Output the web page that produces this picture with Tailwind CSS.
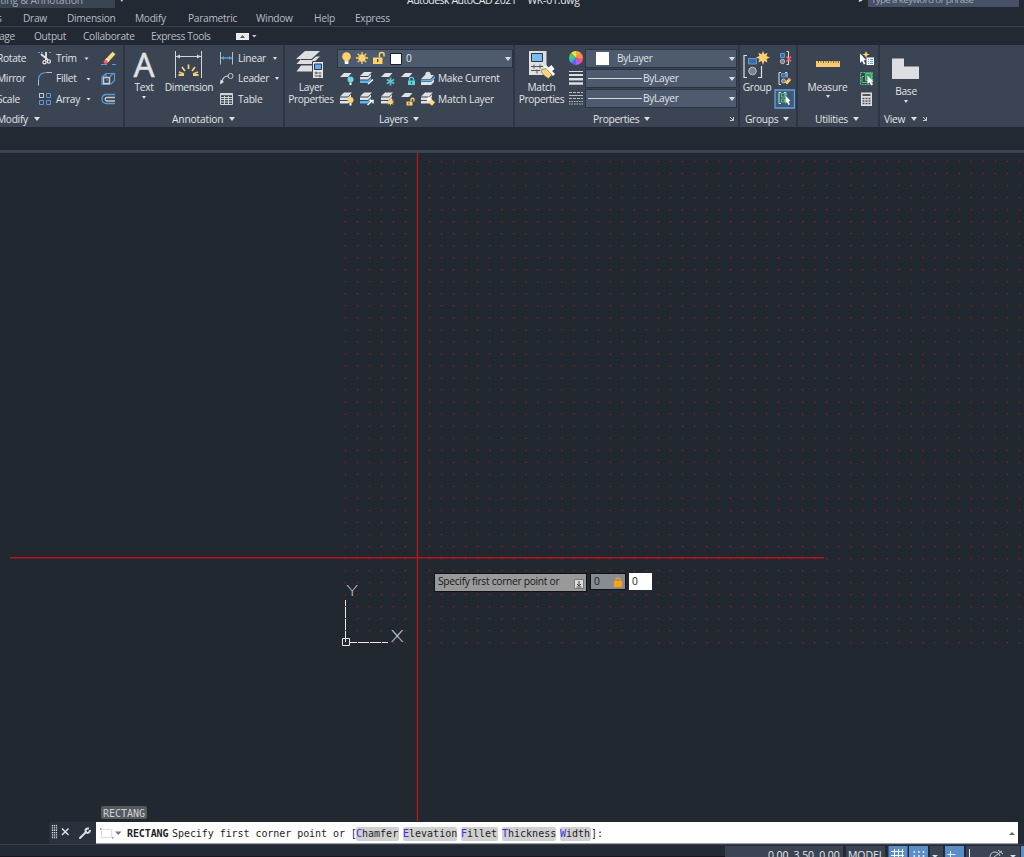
<!DOCTYPE html>
<html lang="en">
<head>
    <meta charset="UTF-8">
    <meta name="viewport" content="width=device-width, initial-scale=1.0">
    <title>Autodesk AutoCAD 2021 - WK-01.dwg</title>
    <script src="https://cdn.jsdelivr.net/npm/@tailwindcss/browser@4"></script>
</head>
<body class="h-[857px] w-[1024px] overflow-hidden bg-[#222933] font-['Open_Sans','Noto_Sans',sans-serif] text-[10.2px] leading-none tracking-[-0.3px] whitespace-nowrap text-[#e2e4e7]">

    <!-- Title Bar -->
    <header class="flex h-2 items-end overflow-hidden">
        <div class="flex h-2 w-[115px] items-end justify-end bg-[#3b4453] pr-8 pb-[3px] tracking-[-0.05px] text-[#a5abb5]">ting &amp; Annotation</div>
        <div class="w-[292px] pb-[5px] pl-[5px] text-[7px]">▾</div>
        <div class="flex w-[446px] gap-[11px] pb-[3px] text-[10.5px] tracking-[-0.48px] text-[#e6e8ea]"><span>Autodesk AutoCAD 2021</span><span class="tracking-[-0.25px]">WK-01.dwg</span></div>
        <div class="w-[15px] pb-[5px] pl-[6px] text-[7px]">▸</div>
        <div class="flex h-[7px] w-[151px] items-end self-start bg-[#465066] pb-[2px] pl-[3px] text-[9.8px] tracking-[-0.65px] text-[#a5abb5]">Type a keyword or phrase</div>
    </header>

    <!-- Menu Bar -->
    <nav class="flex h-[19px] items-center border-b border-[#3a424e] pt-[3px] text-[#b9bdc4]">
        <span class="w-[23px] -indent-[3px]">s</span>
        <span class="w-[44px]">Draw</span>
        <span class="w-[68px]">Dimension</span>
        <span class="w-[53px]">Modify</span>
        <span class="w-[68px]">Parametric</span>
        <span class="w-[58px]">Window</span>
        <span class="w-[41px]">Help</span>
        <span>Express</span>
    </nav>

    <!-- Ribbon Tabs -->
    <nav class="flex h-[18px] items-center text-[#b9bdc4]">
        <span class="w-[34px] -indent-px">age</span>
        <span class="w-[49px]">Output</span>
        <span class="w-[68px]">Collaborate</span>
        <span class="w-[85px] tracking-[-0.4px]">Express Tools</span>
        <svg class="h-[9px] w-6" viewBox="236 32 24 9"><path fill="#e9eaec" d="M236 33h13v7h-13z"/><path fill="#555" d="m240 38 2.500-3 2.500 3z"/><path fill="#c5c9cf" d="M252 35h4.500l-2.200 2.500z"/></svg>
    </nav>

    <!-- Ribbon -->
    <section class="flex h-[82px] bg-[#3b4453]">

        <!-- Modify -->
        <div class="flex w-[125px] flex-col border-r-2 border-[#2e3643]">
            <div class="flex h-16 pt-[3px]">
                <div class="grid h-[61px] w-[38px] grid-rows-3 items-center -indent-[3px]">
                    <span>Rotate</span><span>Mirror</span><span>Scale</span>
                </div>
                <svg class="h-[61px] w-[18px]" viewBox="38 48 18 61" fill="none">
                    <path stroke="#5b9bd5" stroke-dasharray="2 1" d="M38 52.500h6m5 0h3"/>
                    <path stroke="#e4e4e4" stroke-width="1.800" d="m41 54 7 6m-2-8 0 8"/>
                    <circle cx="44.500" cy="62.300" r="1.600" stroke="#e4e4e4" stroke-width="1.300"/><circle cx="48.800" cy="61.500" r="1.600" stroke="#e4e4e4" stroke-width="1.300"/>
                    <path stroke="#5b9bd5" stroke-width="1.200" d="M38.500 80c0-5 3-7.500 8-7.500"/><path stroke="#b9bec5" d="M46.500 72.500H52M38.500 80v5.500"/>
                    <path stroke="#5b9bd5" d="M39.500 93.500h4v4h-4zm7 0h4v4h-4zm-7 7h4v4h-4zm7 0h4v4h-4z"/><path stroke="#c8ccd1" d="M39.500 93.500h4v4h-4z"/>
                </svg>
                <div class="grid h-[61px] w-7 grid-rows-3 items-center">
                    <span>Trim</span><span>Fillet</span><span>Array</span>
                </div>
                <svg class="h-[61px] w-[39px]" viewBox="84 48 39 61" fill="none">
                    <path fill="#dcdee1" d="M84.500 57.500h4l-2 2.500zM86.500 78h4l-2 2.500zM86.500 98h4l-2 2.500z"/>
                    <path stroke="#5b9bd5" d="M101 64.500h6m5 0h4"/><path stroke="#ffd77c" stroke-width="4" d="m107.500 60 6.500-7"/><path stroke="#fff" stroke-width="4" d="m106.300 61.300 1.700-1.800"/><circle cx="105.700" cy="61.800" r="2.100" fill="#ff5b5b"/>
                    <path stroke="#5b9bd5" stroke-width="1.200" d="m102 77 4-3.500h8.500v7l-4 4m-8.500-8v8h8m0-8 4-3.500M106 74v3m0 3h2"/><path stroke="#c8ccd1" stroke-width="1.500" d="M103.500 77.500h6v6h-6z"/>
                    <path stroke="#5b9bd5" stroke-width="1.300" d="M115 94.500h-8.500c-6 0-6 9 0 9h8.500"/><path stroke="#c8ccd1" stroke-width="1.300" d="M115 97.500h-8c-2.500 0-2.500 3.500 0 3.500h8"/>
                </svg>
            </div>
            <div class="flex h-[18px] items-center gap-[6px] pt-[2px]"><span class="-ml-[3px]">Modify</span><svg class="h-1 w-1.5" viewBox="0 0 6 4"><path fill="#dcdee1" d="M0 0h6L3 4z"/></svg></div>
        </div>

        <!-- Annotation -->
        <div class="flex w-[160px] flex-col border-r-2 border-[#2e3643]">
            <div class="flex h-16 pt-[3px]">
                <div class="flex w-[38px] flex-col items-center">
                    <div class="h-[34px] font-['Noto_Sans',sans-serif] text-[33px] leading-[34px] text-[#dfe1e3] [-webkit-text-stroke:0.4px_#dfe1e3]">A</div>
                    <span>Text</span>
                    <svg class="mt-1 h-[3px] w-1" viewBox="0 0 4 3"><path fill="#dcdee1" d="M0 0h4L2 3z"/></svg>
                </div>
                <div class="flex w-[52px] flex-col items-center">
                    <svg class="h-[34px] w-[30px]" viewBox="174 48 30 34" fill="none">
                        <path stroke="#d0d3d7" d="M175.500 51v27m26-27v27M176 56.500h25"/><path fill="#d0d3d7" d="m176 56.500 4-2v4zm25 0-4-2v4z"/>
                        <path stroke="#f3cd77" stroke-width="1.800" d="M188.500 69v-4.500m-3.500 6.500-3-4m10 4 3-4m-11 7-5-2m14 2 5-2m-19.500 3h5.500m9 0h5.500"/>
                    </svg>
                    <span>Dimension</span>
                </div>
                <svg class="ml-1 h-[61px] w-[19px]" viewBox="219 48 19 61" fill="none">
                    <path stroke="#b9bec5" d="M220.500 52v12.500m12-12.500v12.500"/><path stroke="#5b9bd5" stroke-width="1.500" d="M221 58h11"/><path fill="#5b9bd5" d="m221 58 3-2v4zm11 0-3-2v4z"/>
                    <path stroke="#c8ccd1" stroke-width="1.200" d="M222 82c1-5 3-6 7-6"/><circle cx="230.500" cy="76" r="2.500" stroke="#c8ccd1"/><path fill="#dcdee1" d="m220 84.500.5-5 3.500 2.500z"/>
                    <path stroke="#d0d3d7" d="M220.500 93.500h12v11h-12zM220.500 97.500h12m-12 2h12m-12 2.500h12M224.500 96v8m4-8v8"/><path stroke="#d0d3d7" stroke-width="1.500" d="M220 94.500h13"/>
                </svg>
                <div class="grid h-[61px] grid-rows-3 items-center">
                    <span class="flex items-center gap-[7px]">Linear<svg class="h-[3px] w-1" viewBox="0 0 4 3"><path fill="#dcdee1" d="M0 0h4L2 3z"/></svg></span>
                    <span class="flex items-center gap-[6px]">Leader<svg class="h-[3px] w-1" viewBox="0 0 4 3"><path fill="#dcdee1" d="M0 0h4L2 3z"/></svg></span>
                    <span>Table</span>
                </div>
            </div>
            <div class="flex h-[18px] items-center gap-[6px] pt-[2px] pl-[47px]"><span class="tracking-[-0.15px]">Annotation</span><svg class="h-1 w-1.5" viewBox="0 0 6 4"><path fill="#dcdee1" d="M0 0h6L3 4z"/></svg></div>
        </div>

        <!-- Layers -->
        <div class="flex w-[230px] flex-col border-r-2 border-[#2e3643]">
            <div class="flex h-16 pt-[3px]">
                <div class="flex w-[52px] flex-col items-center">
                    <svg class="h-[33px] w-8" viewBox="295 48 32 33" fill="#dcdee0">
                        <path d="m305 51 15 0-8.500 8H296z"/><path d="m301 59-4.500 5H312l8-7.500h-4l-4 3.500h-11z"/><path d="m301 65.500-4.500 6h17l2-3v-6l-3.500 3z"/>
                        <path fill="#e8e8e8" stroke="#3b4453" d="M312.500 61.500h11v17h-11z"/><path fill="#5bb0f5" stroke="#333" d="M314.500 64h7v5.500h-7z"/><path stroke="#555" fill="none" d="M314.500 73h7m-7 3h7m-5.500-4.500v3m4 0v3"/>
                    </svg>
                    <span class="leading-[12px]">Layer</span><span class="leading-[12px] tracking-[-0.4px]">Properties</span>
                </div>
                <div>
                    <div class="mt-px flex h-[19px] w-[176px] items-center border border-[#2b3341] bg-[#4e5a6e]">
                        <svg class="h-[17px] w-[68px]" viewBox="338 50 68 17" fill="none">
                            <circle cx="346.500" cy="56.500" r="4.300" fill="#ffd36b"/><path fill="#ffd36b" d="M344.500 59h4v3h-4z"/><path fill="#fff" d="M344.800 61.500h3.600v2.500h-3.600z"/>
                            <circle cx="362" cy="58" r="3.700" fill="#ffd36b"/><path stroke="#ffd36b" stroke-width="1.300" d="M362 52v2.500m0 7V64m-6-6h2.500m7 0h2.500m-10.300-4.300 1.700 1.700m5.200 5.200 1.700 1.700m0-8.600-1.700 1.700m-5.200 5.200-1.700 1.700"/>
                            <path fill="#ffd36b" d="M373 57.500h9.500V64H373z"/><path stroke="#ffd36b" stroke-width="1.500" d="M379.500 57.500v-3.500c0-2 4.500-2 4.500 0v2.500"/><path fill="#444" d="M377 59h1.300v3H377z"/>
                            <path fill="#fff" stroke="#1c2129" d="M390.500 53.500h11v11h-11z"/>
                        </svg>
                        <span class="grow">0</span>
                        <svg class="mr-px h-1 w-1.5" viewBox="0 0 6 4"><path fill="#dcdee1" d="M0 0h6L3 4z"/></svg>
                    </div>
                    <div class="flex">
                        <svg class="h-[41px] w-[101px]" viewBox="337 68 101 41" fill="none">
                            <defs>
                                <g id="sheet"><path fill="#e0e1e3" d="M4 0h7.500L8 4H0z"/></g>
                                <g id="stack"><path fill="#e0e1e3" d="M4 0h8L8 4H0zM0 5h8l3-3v2.500L8 7.500H0zM0 8.500h8l3-3V8l-3 3H0z"/></g>
                                <g id="stackBlue"><path fill="#e0e1e3" d="M4 0h8L8 4H0zM0 5h8l3-3v2.500L8 7.500H0z"/><path fill="#5eb3f7" d="M0 8.500h8l3-3V8l-3 3H0z"/></g>
                            </defs>
                            <use href="#sheet" x="340" y="73"/><circle cx="350.500" cy="79.500" r="3" fill="#69dbe0"/><path fill="#fff" d="M349.500 82.500h2V85h-2z"/>
                            <use href="#stackBlue" x="360" y="72"/><path stroke="#fff" stroke-width="1.400" d="m368 84 5-4.500"/>
                            <use href="#sheet" x="381" y="73"/><path stroke="#58c4cc" stroke-width="1.700" d="M390.500 77.500v8m-3.700-6 7.400 4m0-4-7.400 4"/>
                            <use href="#sheet" x="401" y="73"/><path fill="#58d5dc" d="M408 80.500h7V85h-7z"/><path stroke="#58d5dc" stroke-width="1.300" d="M409.500 80.500v-2c0-1.500 4-1.500 4 0v2"/><path fill="#263" d="M411 82h1v2h-1z"/>
                            <path fill="#e0e1e3" d="M425 75h9l-3.500 4H421zM421 82h10l3-3v3l-3 3H421z"/><path fill="#5eb3f7" d="M421 79.500h10l4-3.500v2l-4 3.500h-10z"/><circle cx="428" cy="74.500" r="2.700" fill="#e0e1e3"/>
                            <use href="#stack" x="340" y="92.500"/><circle cx="350.500" cy="100" r="3" fill="#ffd36b"/><path fill="#fff" d="M349.500 103h2v2.500h-2z"/>
                            <use href="#stackBlue" x="360" y="92.500"/><path stroke="#fff" stroke-width="1.400" d="m367.500 105 5-4.500m-3 0h3.500v3"/>
                            <use href="#stack" x="381" y="92.500"/><circle cx="390.500" cy="102" r="2.300" fill="#ffd36b"/><path stroke="#ffd36b" d="M390.500 98.500v7M387 102h7m-6-2.500 5 5m0-5-5 5"/>
                            <use href="#sheet" x="401" y="93"/><path fill="#ffd36b" d="M406.500 101.500h6v4h-6z"/><path stroke="#ffd36b" stroke-width="1.300" d="M411 101v-1.500c0-1.700 3-1.700 3 0v2"/><path fill="#444" d="M408.500 102.500h1v2h-1z"/>
                            <use href="#stack" x="421" y="92.500"/><path stroke="#fff" stroke-width="4" d="m427.500 98 3 3"/><path stroke="#ffd88a" stroke-width="4.500" d="m429.500 100.500 4 3.500"/>
                        </svg>
                        <div class="grid h-[41px] grid-rows-2 items-center"><span>Make Current</span><span class="tracking-[-0.2px]">Match Layer</span></div>
                    </div>
                </div>
            </div>
            <div class="flex h-[18px] items-center gap-[5px] pt-[2px] pl-[94px]">Layers<svg class="h-1 w-1.5" viewBox="0 0 6 4"><path fill="#dcdee1" d="M0 0h6L3 4z"/></svg></div>
        </div>

        <!-- Properties -->
        <div class="flex w-[225px] flex-col border-r-2 border-[#2e3643]">
            <div class="flex h-16 pt-[3px]">
                <div class="flex w-[53px] flex-col items-center">
                    <svg class="h-[33px] w-8" viewBox="526 48 32 33" fill="none">
                        <path fill="#dedfe1" d="M529 51h17.500v24H529z"/><path fill="#74bdf9" stroke="#333" d="M531.500 53.500h11v8h-11z"/><path stroke="#555" d="M531 66.500h12m-12 4h9m-6-6v4m6-4v4m-3 1v4"/>
                        <path stroke="#fff" stroke-width="5" d="m547 72 6-5"/><path stroke="#fff" stroke-width="3" d="m545 66 9 9"/><path fill="#ffd07a" stroke="#5b4a2b" stroke-width=".5" d="m541 70 5-1.500 6 6.500-3.500 3.500c-4-2-7-5-7.500-8.500z"/>
                    </svg>
                    <span class="leading-[12px]">Match</span><span class="leading-[12px] tracking-[-0.4px]">Properties</span>
                </div>
                <svg class="h-[61px] w-[17px]" viewBox="568 48 17 61" fill="none">
                    <g><path fill="#ffa63b" d="M576 58v-7a7 7 0 0 1 5 2z"/><path fill="#f6db4b" d="m576 58-5-5a7 7 0 0 1 5-2z"/><path fill="#ff8b4b" d="m576 58 5-5a7 7 0 0 1 2 5z"/><path fill="#f35b6b" d="M576 58h7a7 7 0 0 1-2 5z"/><path fill="#b55cf5" d="m576 58 5 5a7 7 0 0 1-5 2z"/><path fill="#6c5cf5" d="M576 58v7a7 7 0 0 1-5-2z"/><path fill="#35b8d0" d="m576 58-5 5a7 7 0 0 1-2-5z"/><path fill="#52cc61" d="M576 58h-7a7 7 0 0 1 2-5z"/></g>
                    <path stroke="#dcdee1" d="M569 71.500h14"/><path stroke="#dcdee1" stroke-width="2" d="M569 75h14"/><path stroke="#dcdee1" stroke-width="2.500" d="M569 79.200h14m-14 4.300h14"/>
                    <path stroke="#b9bec5" stroke-dasharray="3 1" d="M569 92.500h14m-14 6h14"/><path stroke="#b9bec5" d="M569 95.500h14"/><path stroke="#b9bec5" stroke-dasharray="1.500 1" d="M569 101.500h14m-14 2.500h14"/>
                </svg>
                <div class="flex flex-col gap-px pt-px">
                    <div class="flex h-[19px] w-[152px] items-center border border-[#2b3341] bg-[#4e5a6e]">
                        <div class="ml-[10px] h-[13px] w-[13px] bg-white"></div>
                        <span class="grow pl-[8px]">ByLayer</span>
                        <svg class="mr-px h-1 w-1.5" viewBox="0 0 6 4"><path fill="#dcdee1" d="M0 0h6L3 4z"/></svg>
                    </div>
                    <div class="flex h-[19px] w-[152px] items-center border border-[#2b3341] bg-[#4e5a6e]">
                        <div class="ml-[2px] h-px w-[54px] bg-[#d5d8dc]"></div>
                        <span class="grow pl-px">ByLayer</span>
                        <svg class="mr-px h-1 w-1.5" viewBox="0 0 6 4"><path fill="#dcdee1" d="M0 0h6L3 4z"/></svg>
                    </div>
                    <div class="flex h-[19px] w-[152px] items-center border border-[#2b3341] bg-[#4e5a6e]">
                        <div class="ml-[2px] h-px w-[54px] bg-[#d5d8dc]"></div>
                        <span class="grow pl-px">ByLayer</span>
                        <svg class="mr-px h-1 w-1.5" viewBox="0 0 6 4"><path fill="#dcdee1" d="M0 0h6L3 4z"/></svg>
                    </div>
                </div>
            </div>
            <div class="flex h-[18px] items-center gap-[5px] pt-[2px] pl-[78px]">Properties<svg class="h-1 w-1.5" viewBox="0 0 6 4"><path fill="#dcdee1" d="M0 0h6L3 4z"/></svg>
                <svg class="mr-1 ml-auto h-1 w-1" viewBox="0 0 4 4"><path stroke="#c8ccd1" fill="none" d="m0 0 3 3m.5-3v3.500H0"/></svg></div>
        </div>

        <!-- Groups -->
        <div class="flex w-[58px] flex-col border-r-2 border-[#2e3643]">
            <div class="flex h-16 pt-[3px]">
                <div class="flex w-[34px] flex-col items-center">
                    <svg class="h-[34px] w-[30px]" viewBox="742 48 30 34" fill="none">
                        <path stroke="#dcdee1" stroke-width="1.200" d="M747 55.500h-3v22h3m11 0h3.500V66"/><path fill="#3c6d9c" stroke="#5b9bd5" d="M748.500 58.500h8v5.500h-8z"/><circle cx="752.500" cy="71" r="3.800" fill="#7c828c" stroke="#b9bec5"/>
                        <path fill="#ffcf70" d="m763 51 1.300 3.300 3.200-1.600-1 3.400 3.500 1.400-3.500 1.600 1 3.300-3.200-1.400L763 65l-1.400-4-3.200 1.400 1-3.300-3.400-1.600 3.400-1.400-1-3.400 3.200 1.600z"/>
                    </svg>
                    <span>Group</span>
                </div>
                <svg class="h-[61px] w-[21px]" viewBox="774 48 21 61" fill="none">
                    <path fill="#3c6d9c" stroke="#5b9bd5" d="M780.500 53.500h4v4h-4z"/><circle cx="782.500" cy="61.500" r="2.200" fill="#7c828c" stroke="#b9bec5"/><path stroke="#dcdee1" d="M786.500 51.500h2v13h-2"/><path stroke="#ff5b62" stroke-width="1.700" d="m786.500 56.500 4.500 5m0-5-4.500 5"/>
                    <path stroke="#dcdee1" d="M781 72.500h-2v12h2m4-12h2v5"/><path fill="#3c6d9c" stroke="#5b9bd5" d="M781.500 73.500h4v3.500h-4z"/><circle cx="783.500" cy="81" r="2" fill="#7c828c" stroke="#b9bec5"/><path stroke="#ffcf70" stroke-width="3" d="m786 83.500 4-4.500"/><path stroke="#ff5b62" stroke-width="3" d="m789.500 79.500 1-1"/>
                    <path fill="#3f5a78" stroke="#5fa3e0" stroke-width="1.300" d="M775 90h19.500v18H775z"/><path stroke="#dcdee1" d="M781 92.500h-2v11h2m3-11h2v3"/><path fill="#2d7a51" stroke="#4cc27b" d="M781.500 93.500h3v3.500h-3zm0 5.500h3v3h-3z"/><path fill="#fff" d="m785.500 95.500 5 5.500-2 .2 1.400 3-1.400.8-1.500-3-1.500 1.500z"/>
                </svg>
            </div>
            <div class="flex h-[18px] items-center gap-[5px] pt-[2px] pl-[5px]">Groups<svg class="h-1 w-1.5" viewBox="0 0 6 4"><path fill="#dcdee1" d="M0 0h6L3 4z"/></svg></div>
        </div>

        <!-- Utilities -->
        <div class="flex w-[82px] flex-col border-r-2 border-[#2e3643]">
            <div class="flex h-16 pt-[3px]">
                <div class="flex w-[59px] flex-col items-center">
                    <svg class="h-[34px] w-[30px]" viewBox="812 48 30 34"><path fill="#f7cb70" d="M815 61h24v6h-24z"/><path stroke="#7c6436" d="M817.500 61v2m2.500-2v1.500m2.500-1.500v2m2.500-2v1.500m2.500-1.500v2m2.500-2v1.500m2.500-1.500v2m2.500-2v1.500m2.500-1.500v2"/></svg>
                    <span class="tracking-[-0.2px]">Measure</span>
                    <svg class="mt-[3px] h-[3px] w-1" viewBox="0 0 4 3"><path fill="#dcdee1" d="M0 0h4L2 3z"/></svg>
                </div>
                <svg class="h-[61px] w-[20px]" viewBox="857 48 20 61" fill="none">
                    <path fill="#fff" d="M866.500 57.500h7.500V65h-7.500z"/><path stroke="#5b9bd5" d="M868 59.500h1m1 0h3m-5 2h1m1 0h3m-5 2h1m1 0h3"/><path fill="#ffcf70" d="m866 51 1 2.500 2.500 1-2.500 1-1 2.500-1-2.500-2.500-1 2.500-1z"/><path fill="#fff" d="m860 53.500 6 6.500-2.200.2 1.500 3.500-1.500.8-1.700-3.500-2.100 2z"/>
                    <path stroke="#54c67d" stroke-dasharray="2 1" d="M860.500 72.500h12v12h-12z"/><path fill="#3b9863" stroke="#54c67d" d="M865.500 73.500h6v7h-6z"/><path stroke="#54c67d" d="M864 76.500h-2v6h6v-1"/><path fill="#fff" d="m867.500 75.500 6 6-2.200.2 1.500 3-1.500.8-1.700-3-2.100 1.500z"/>
                    <path fill="#dcdee1" d="M861 92.500h11V106h-11z"/><path fill="#555" d="M862.500 94h8v2h-8z"/><path stroke="#4a505b" stroke-width="1.500" stroke-dasharray="2 1" d="M862.500 98.500h8m-8 2.500h8m-8 2.500h8"/>
                </svg>
            </div>
            <div class="flex h-[18px] items-center gap-[5px] pt-[2px] pl-[17px]">Utilities<svg class="h-1 w-1.5" viewBox="0 0 6 4"><path fill="#dcdee1" d="M0 0h6L3 4z"/></svg></div>
        </div>

        <!-- View -->
        <div class="flex w-36 flex-col">
            <div class="flex h-16 w-[52px] flex-col items-center pt-[3px]">
                <svg class="h-[38px] w-[30px]" viewBox="891 48 30 38"><path fill="#dcdee1" d="M892 58.500h12v8h15v12.500h-27z"/></svg>
                <span>Base</span>
                <svg class="mt-1 h-[3px] w-1" viewBox="0 0 4 3"><path fill="#dcdee1" d="M0 0h4L2 3z"/></svg>
            </div>
            <div class="flex h-[18px] items-center gap-[6px] pt-[2px] pl-[4px]">View<svg class="h-1 w-1.5" viewBox="0 0 6 4"><path fill="#dcdee1" d="M0 0h6L3 4z"/></svg>
                <svg class="h-1 w-1" viewBox="0 0 4 4"><path stroke="#c8ccd1" fill="none" d="m0 0 3 3m.5-3v3.500H0"/></svg></div>
        </div>
    </section>

    <div class="h-[23px]"></div>
    <div class="h-[3px] bg-[#3b4453]"></div>

    <!-- Drawing Area -->
    <main class="relative h-[669px] bg-[#212830]">
        <svg class="block h-[669px] w-[1024px]" viewBox="0 153 1024 669" fill="none">
            <defs>
                <pattern id="dots" x="339.300" y="155.300" width="12.036" height="12.036" patternUnits="userSpaceOnUse"><path fill="#b81418" d="M5.500 5.500h1.150v1.150H5.500z"/></pattern>
            </defs>
            <path fill="url(#dots)" d="M340 155.300h74V648h-74zM420 155.300h604V648H420z"/>
            <path fill="#b81418" d="M10 557h814v1.400H10z"/>
            <path fill="#cc1214" d="M416.800 153h1.200v668h-1.200z"/>
            <path stroke="#e8e8e8" d="M345.500 600v42M342.500 638.500h7v7h-7zM349 642.500h39"/>
            <path stroke="#b02a2c" stroke-dasharray="1 11.036" d="M345.500 606v36M357 642.500h30"/>
            <text x="346" y="596" fill="#d5d8dc" font-family="Inter" font-weight="200" font-size="15" textLength="12" lengthAdjust="spacingAndGlyphs">Y</text>
            <text x="390.500" y="641.500" fill="#d5d8dc" font-family="Inter" font-weight="200" font-size="15.500" textLength="13" lengthAdjust="spacingAndGlyphs">X</text>
        </svg>

        <!-- Dynamic input at the cursor -->
        <div class="absolute top-[420px] left-[434px] flex items-start gap-[3px] text-[#16181b]">
            <div class="flex h-[19px] w-[153px] items-center border border-[#0f1216] bg-[#999] pl-[3px]">
                <span class="grow pb-[2px] tracking-[-0.27px]">Specify first corner point or</span>
                <svg class="mt-[2px] mr-[2px] h-[10px] w-[10px]" viewBox="0 0 10 10" fill="none"><path fill="#ddd" stroke="#777" d="M.5.500h9v9h-9z"/><path stroke="#444" d="M5 2v4.500M3 5l2 2 2-2M2.500 8h5"/></svg>
            </div>
            <div class="flex h-[17px] w-[36px] items-center justify-between border border-[#0f1216] bg-[#888b90] pr-[3px] pl-[3px]">0<svg class="h-[10px] w-2" viewBox="0 0 8 10" fill="none"><path fill="#f7a416" d="M0 4h8v6H0z"/><path stroke="#f7a416" stroke-width="1.200" d="M2 4V2.500c0-2.300 4-2.300 4 0V4"/></svg></div>
            <div class="flex h-[17px] w-[23px] items-center bg-white pl-[3px]">0</div>
        </div>

        <div class="absolute top-[653px] left-[101px] flex h-[13px] w-[46px] items-center justify-center rounded-xs bg-[#555a5f] pt-[2px] font-['DejaVu_Sans_Mono',monospace] text-[10px] tracking-normal text-[#d0d2d4]">RECTANG</div>
    </main>

    <!-- Command Line -->
    <div class="flex h-[22px] w-[1018px] bg-[#212830] pl-[49px]">
        <svg class="h-[22px] w-[47px] bg-[#2b313c]" viewBox="49 822 47 22" fill="none">
            <path stroke="#dcdee1" stroke-width="1.300" stroke-dasharray="1.300 1" d="M52.500 825v14m2-14v14m2-14v14" />
            <path stroke="#dcdee1" stroke-width="1.500" d="m62 828.500 6.500 6.500m0-6.500L62 835"/>
            <path stroke="#dcdee1" stroke-width="2" stroke-linecap="round" d="m80 838 6-6"/><path stroke="#dcdee1" stroke-width="2" d="M89 828.500c-3-.5-4.500 1.500-3 3.500s4 .5 4-2"/>
        </svg>
        <div class="flex grow items-center border-b border-[#9a9ea5] bg-white pt-[2px] font-['DejaVu_Sans_Mono',monospace] text-[10px] tracking-normal text-[#1e1e1e]">
            <svg class="mb-px h-3 w-[31px]" viewBox="96 827 31 12" fill="none"><path stroke="#ddd" d="M101.500 829.500h10v8h-10z"/><path fill="#4aa8e8" d="M100 828h1.500v1.500H100zM112 837h1.500v1.500H112z"/><path fill="#777" d="M115 831.500h6.500l-3.200 3.500z"/></svg>
            <span class="w-[45px] font-bold tracking-[-0.1px]">RECTANG</span>
            <span class="w-[184px] tracking-[-0.06px]">Specify first corner point or [</span>
            <span class="flex gap-1">
                <span class="w-[43px] rounded-xs bg-[#d0d0d0] py-[2px]"><span class="text-[#3232e6]">C</span>hamfer</span>
                <span class="w-[54px] rounded-xs bg-[#d0d0d0] py-[2px]"><span class="text-[#3232e6]">E</span>levation</span>
                <span class="w-[37px] rounded-xs bg-[#d0d0d0] py-[2px]"><span class="text-[#3232e6]">F</span>illet</span>
                <span class="w-[54px] rounded-xs bg-[#d0d0d0] py-[2px]"><span class="text-[#3232e6]">T</span>hickness</span>
                <span class="w-[31px] rounded-xs bg-[#d0d0d0] py-[2px]"><span class="text-[#3232e6]">W</span>idth</span>
            </span>
            <span>]:</span>
            <svg class="mr-[3px] ml-auto h-[3px] w-1.5" viewBox="0 0 6 3"><path fill="#666" d="M0 3h6L3 0z"/></svg>
        </div>
    </div>

    <!-- Status Bar -->
    <footer class="flex h-[13px] justify-end overflow-hidden border-t border-[#39414d] bg-[#232a35] pt-px">
        <div class="h-[11px] w-[725px] border-b border-[#1a1420]"></div>
        <div class="flex w-[299px] gap-[3px] text-[10.5px] tracking-[-0.1px] text-[#e6e8ea]">
            <div class="w-[118px] bg-[#3b4453] pt-[4px] pl-[43px]">0.00, 3.50, 0.00</div>
            <div class="w-[39px] bg-[#3b4453] pt-[4px] pl-[2px]">MODEL</div>
            <svg class="h-[11px] w-[136px]" viewBox="888 846 136 11" fill="none">
                <path fill="#5b8ec9" d="M888.500 846h19v11h-19zM909 846h19v11h-19zM945 846h19v11h-19zM1021 846h3v11h-3z"/><path fill="#3b4453" d="M930 846h13v11h-13zM966 846h54v11h-54z"/>
                <path stroke="#fff" d="M894.500 849v8m4-8v8m4-8v8M891 851.500h13m-13 4h13"/><path stroke="#fff" stroke-width="1.600" stroke-dasharray="1.600 3" d="M913.500 852h11m-11 4h11"/>
                <path fill="#dcdee1" d="M932 855h6l-3 3zM1010 855h6l-3 3z"/><path stroke="#e6f0fa" d="M950.500 851v6m-3-2.500h8M969.500 849v8"/><path stroke="#c8ccd1" d="M990 857c0-6 8-7 10-1m-6 1 8-6m-4-1 5 4"/>
            </svg>
        </div>
    </footer>
</body>
</html>
